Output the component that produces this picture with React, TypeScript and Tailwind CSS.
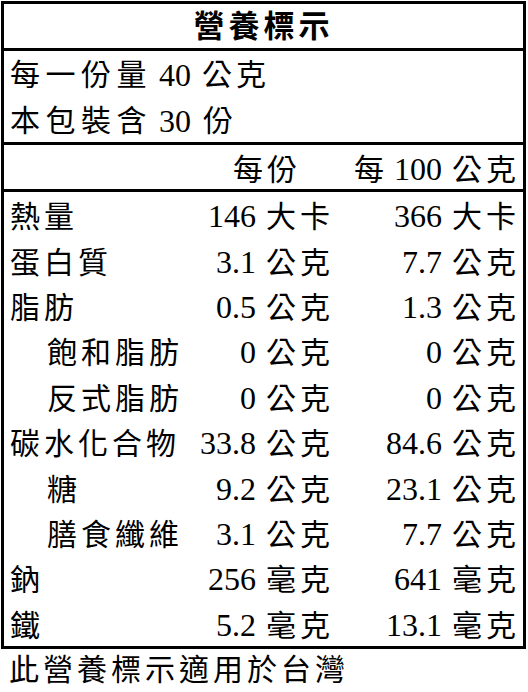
const rows = [
  { name: "熱量", indent: false, a: "146", b: "366", unit: "大卡" },
  { name: "蛋白質", indent: false, a: "3.1", b: "7.7", unit: "公克" },
  { name: "脂肪", indent: false, a: "0.5", b: "1.3", unit: "公克" },
  { name: "飽和脂肪", indent: true, a: "0", b: "0", unit: "公克" },
  { name: "反式脂肪", indent: true, a: "0", b: "0", unit: "公克" },
  { name: "碳水化合物", indent: false, a: "33.8", b: "84.6", unit: "公克" },
  { name: "糖", indent: true, a: "9.2", b: "23.1", unit: "公克" },
  { name: "膳食纖維", indent: true, a: "3.1", b: "7.7", unit: "公克" },
  { name: "鈉", indent: false, a: "256", b: "641", unit: "毫克" },
  { name: "鐵", indent: false, a: "5.2", b: "13.1", unit: "毫克" },
];

// CJK glyphs in Noto Sans are larger than the Ming face in the label, so shrink them a bit
const Han = ({ children, className = "" }: { children: string; className?: string }) => (
  <span className={`text-[30px] tracking-[4px] ${className}`}>{children}</span>
);

const Amount = ({ value, unit }: { value: string; unit: string }) => (
  <span className="whitespace-nowrap">
    {value}
    <Han className="ml-[10px] mr-[-4px]">{unit}</Han>
  </span>
);

export default function App() {
  return (
    <div
      className="w-[528px] h-[692px] bg-white text-black text-[32px] leading-none"
      style={{ fontFamily: '"Liberation Serif", "Noto Sans CJK TC", serif' }}
    >
      <div className="ml-[1px] mt-[1px] w-[525px] border-[3px] border-black">
        <div className="flex h-[47px] items-center justify-center border-b-[3px] border-black pt-[1px] font-bold">
          <Han className="text-[31px]">營養標示</Han>
        </div>

        <div className="border-b-[3px] border-black pl-[6px]">
          <div className="flex h-[45.5px] items-center pt-[3px]">
            <Han className="tracking-[5.5px]">每一份量</Han>
            <span className="ml-[7px]">40</span>
            <Han className="ml-[11px] tracking-[3px]">公克</Han>
          </div>
          <div className="flex h-[45.5px] items-center pt-[3px]">
            <Han className="tracking-[5.5px]">本包裝含</Han>
            <span className="ml-[7px]">30</span>
            <Han className="ml-[12px]">份</Han>
          </div>
        </div>

        <div className="flex h-[47px] items-center border-b-[3px] border-black pt-[3px]">
          <div className="flex-1" />
          <div className="w-[140px] pr-[33px] text-right">
            <Han className="mr-[-4px]">每份</Han>
          </div>
          <div className="w-[193px] pr-[7px] text-right whitespace-nowrap">
            <Han>每</Han>
            <span className="ml-[6px]">100</span>
            <Han className="ml-[10px] mr-[-4px]">公克</Han>
          </div>
        </div>

        <div>
          {rows.map((r) => (
            <div key={r.name} className="flex h-[45.4px] items-center pt-[3px]">
              <div className={`flex-1 ${r.indent ? "pl-[43px]" : "pl-[6px]"}`}>
                <Han>{r.name}</Han>
              </div>
              <div className="w-[140px] text-right">
                <Amount value={r.a} unit={r.unit} />
              </div>
              <div className="w-[193px] pr-[7px] text-right">
                <Amount value={r.b} unit={r.unit} />
              </div>
            </div>
          ))}
        </div>
      </div>

      <div className="flex h-[40px] items-center pl-[9px] pt-[2px]">
        <Han>此營養標示適用於台灣</Han>
      </div>
    </div>
  );
}
